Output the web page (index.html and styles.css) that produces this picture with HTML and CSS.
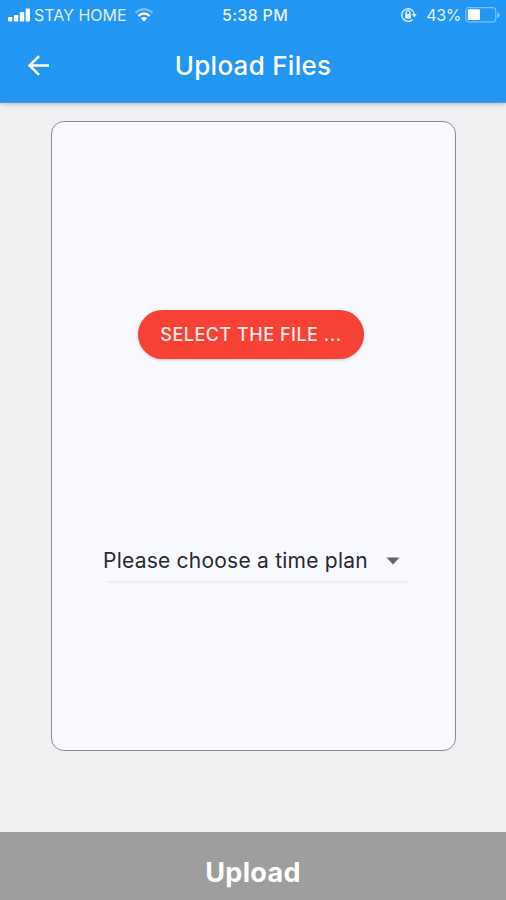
FILE: index.html
```html
<!DOCTYPE html>
<html lang="en">
<head>
<meta charset="utf-8">
<title>Upload Files</title>
<link rel="stylesheet" href="styles.css">
</head>
<body>
<div class="screen">
  <header class="header">
    <div class="status">
      <div class="status-left">
        <svg class="signal" width="23" height="15" viewBox="0 0 23 15" fill="#fff"><rect x="0" y="9" width="4.4" height="4.5" rx="1"/><rect x="5.9" y="7" width="4.4" height="6.5" rx="1"/><rect x="11.8" y="4" width="4.4" height="9.5" rx="1"/><rect x="17.6" y="0.5" width="4.4" height="13" rx="1"/></svg>
        <span class="carrier">STAY HOME</span>
        <svg class="wifi" width="20" height="14" viewBox="0 0 20 14" fill="none" stroke="#fff" stroke-width="2"><path d="M1.5 4.8Q10-2.4 18.5 4.8" opacity=".45"/><path d="M4.4 7.8Q10 3 15.6 7.8" stroke-width="2.4"/><path d="M6.8 10.2Q10 7.6 13.2 10.2L10 13.4Z" fill="#fff" stroke="none"/></svg>
      </div>
      <span class="time">5:38 PM</span>
      <div class="status-right">
        <svg class="lock" width="17" height="16" viewBox="0 0 17 16" fill="none" stroke="#fff" stroke-width="1.4"><path d="M12.6 12.4A6.3 6.3 0 1 1 14.3 7.5"/><path d="M11.8 7h5l-2.5 3.4Z" fill="#fff" stroke="none"/><path d="M5.1 6.8h5.8v4.8H5.1Z" fill="#fff" stroke="none"/><path d="M6.1 7V5.5a1.9 1.9 0 0 1 3.8 0V7"/></svg>
        <span class="percent">43%</span>
        <svg class="battery" width="35" height="16" viewBox="0 0 35 16"><rect x=".7" y=".7" width="30" height="14.2" rx="3" fill="none" stroke="#fff" stroke-opacity=".42" stroke-width="1.2"/><rect x="2.8" y="2.3" width="12.2" height="10.7" rx="1" fill="#fff"/><path d="M32.3 5v6q2.3-1 2.3-3t-2.3-3Z" fill="#fff" fill-opacity=".5"/></svg>
      </div>
    </div>
    <div class="navbar">
      <svg class="back" width="24" height="24" viewBox="0 0 24 24" fill="none" stroke="#fff" stroke-width="2.6"><path d="M23 11.5H4M13 2.2L3.6 11.5l9.4 9.3"/></svg>
      <h1 class="title">Upload Files</h1>
    </div>
  </header>
  <main class="content">
    <section class="card">
      <button class="select-file">SELECT THE FILE ...</button>
      <div class="dropdown">
        <span class="dropdown-label">Please choose a time plan</span>
        <svg class="caret" width="14" height="8" viewBox="0 0 14 8"><path d="M.5.5h13L7 7.5Z" fill="#626367"/></svg>
      </div>
    </section>
  </main>
  <button class="upload">Upload</button>
</div>
</body>
</html>
```
FILE: styles.css
```css
* { box-sizing: border-box; }
body { margin: 0; font-family: Inter, "Liberation Sans", sans-serif; }
button { border: 0; padding: 0; font-family: inherit; }
svg { display: block; flex: none; }
span, h1, button { white-space: nowrap; }

.screen {
  width: 506px;
  height: 900px;
  display: flex;
  flex-direction: column;
  background: #eff0f2;
  overflow: hidden;
}
.header {
  height: 103px;
  flex: none;
  background: #2296f3;
  color: #fff;
  border-bottom: 1px solid #4a9fe4;
  box-shadow: 0 1px 4px rgba(0, 0, 0, .25);
}
.status {
  height: 30px;
  display: grid;
  grid-template-columns: 1fr auto 1fr;
  align-items: center;
}
.status-left { display: flex; align-items: center; padding-left: 8px; }
.carrier { margin-left: 3px; font-size: 16px; opacity: .85; }
.wifi { margin-left: 7px; }
.time { font-size: 16px; font-weight: 500; letter-spacing: .3px; opacity: .9; margin-left: 4px; }
.status-right { display: flex; align-items: center; justify-content: flex-end; padding-right: 6px; }
.lock { opacity: .85; }
.percent { margin: 0 4px 0 9px; font-size: 16px; letter-spacing: -.4px; opacity: .88; }
.navbar {
  height: 72px;
  display: grid;
  grid-template-columns: 1fr auto 1fr;
  align-items: center;
}
.back { margin-left: 26px; }
.title { margin: 0; font-size: 26px; line-height: 32px; font-weight: 500; letter-spacing: .28px; }
.content { flex: 1; padding: 18px 50px 0 51px; }
.card {
  height: 630px;
  border: 1px solid #8c8d8f;
  border-radius: 13px;
  background: #f8f9fe;
  display: flex;
  flex-direction: column;
}
.select-file {
  width: 226px;
  height: 49px;
  margin: 188px 0 0 86px;
  border-radius: 25px;
  background: #f64134;
  color: #ffe9e9;
  font-size: 18px;
  font-weight: 500;
  letter-spacing: .5px;
  box-shadow: 0 1px 3px rgba(0, 0, 0, .2);
}
.dropdown {
  width: 300px;
  height: 42px;
  margin: 182px 0 0 56px;
  border-bottom: 2px solid #eeeff3;
  display: flex;
  align-items: center;
}
.dropdown-label { margin: -1px 0 0 -5px; color: #292a2d; font-size: 21px; letter-spacing: .23px; }
.caret { margin-left: auto; margin-right: 8px; }
.upload {
  height: 68px;
  flex: none;
  padding-top: 12px;
  background: #9e9e9e;
  color: #fff;
  font-size: 27px;
  font-weight: 700;
  letter-spacing: .3px;
}
```
